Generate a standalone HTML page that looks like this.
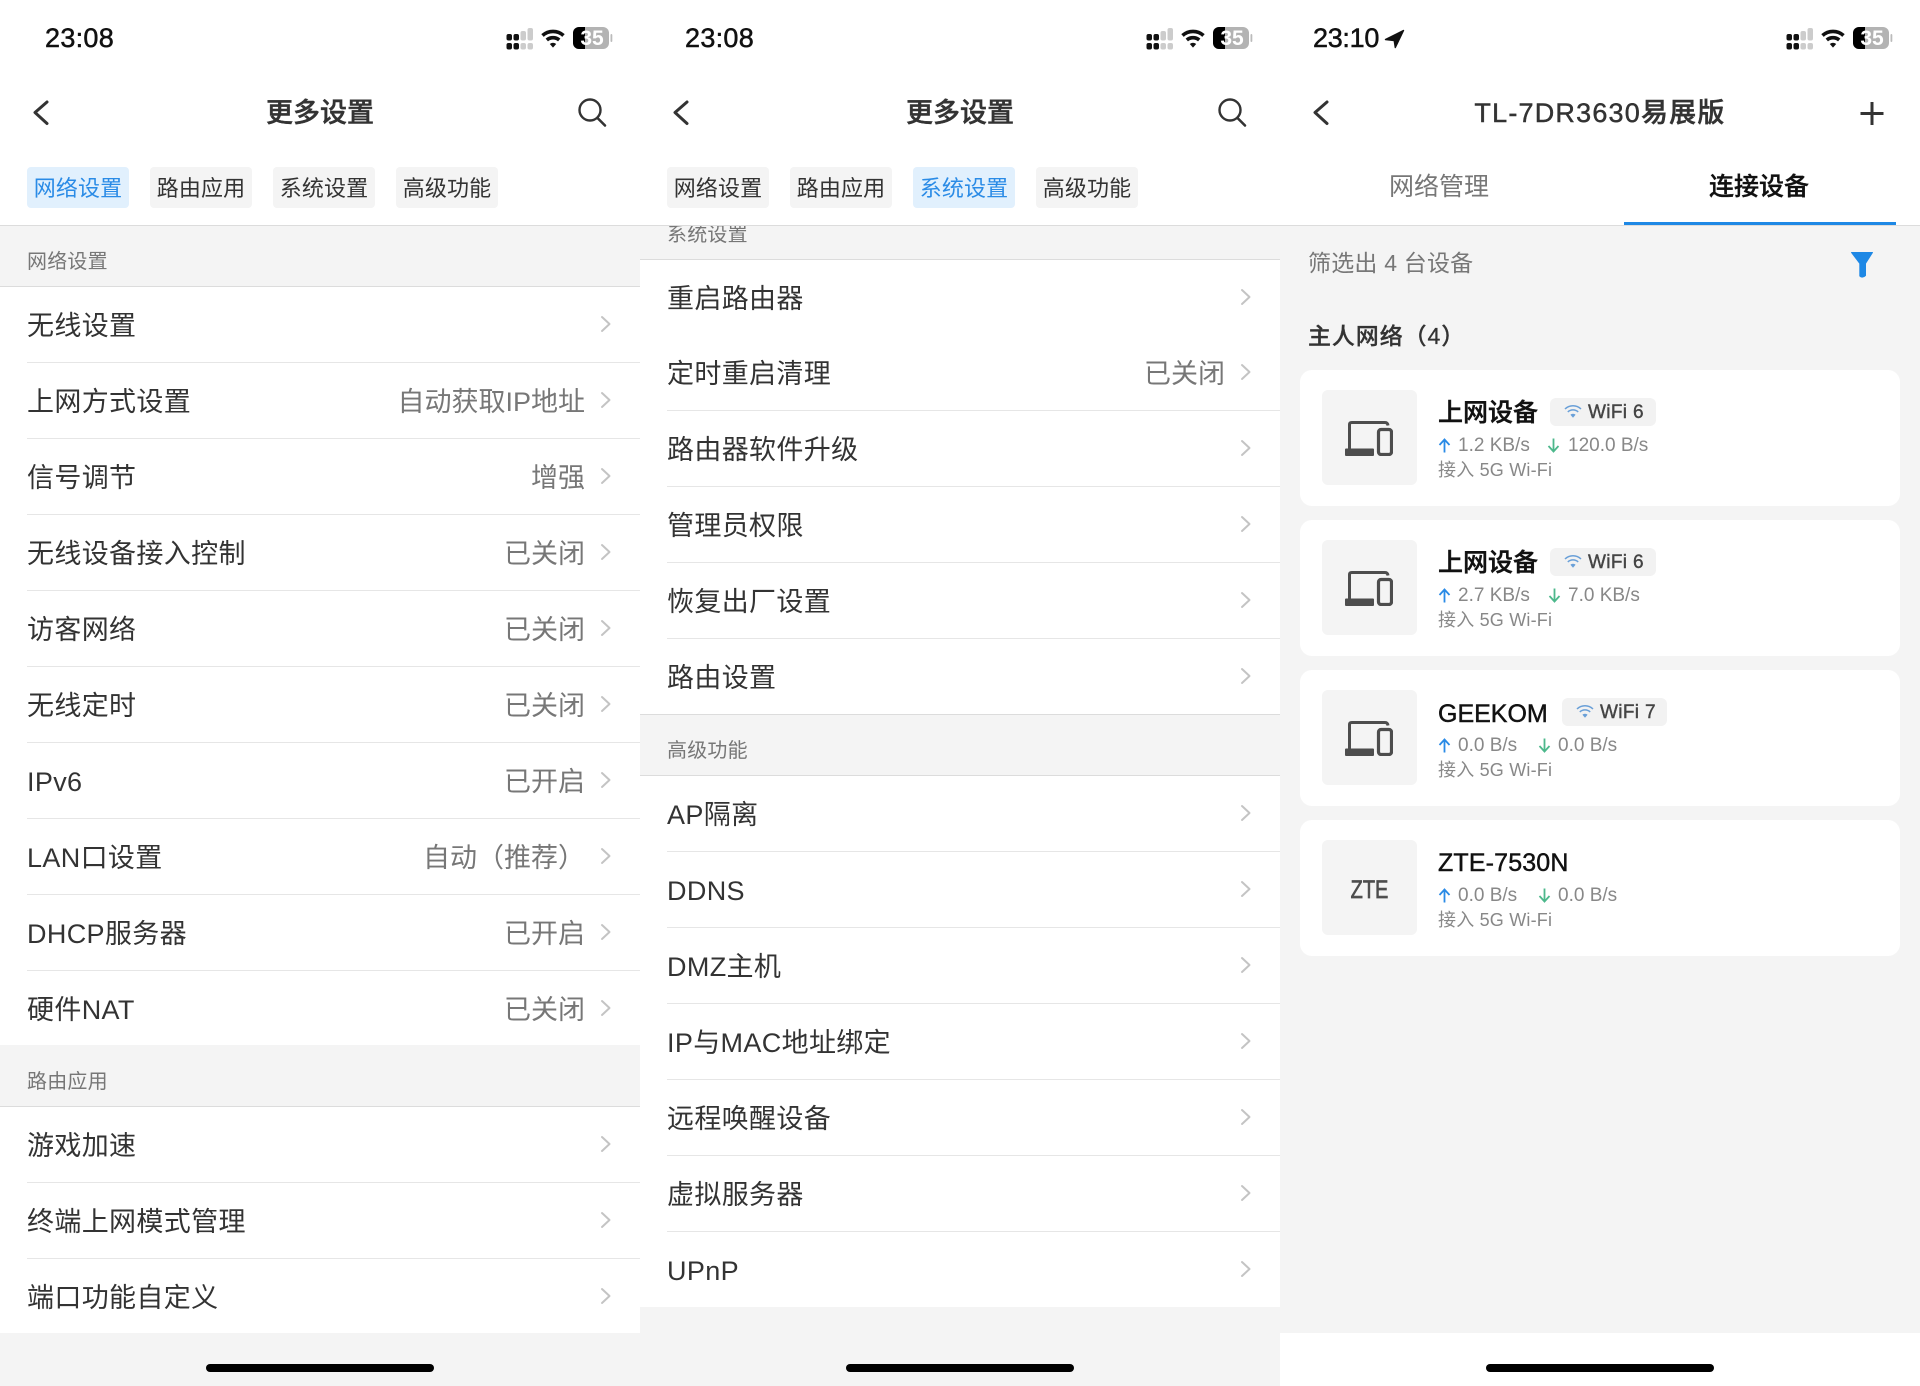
<!DOCTYPE html>
<html lang="zh">
<head>
<meta charset="utf-8">
<title>更多设置</title>
<style>
html,body{margin:0;padding:0;width:1920px;height:1386px;overflow:hidden;background:#fff}
*{box-sizing:border-box}
body{font-family:"Liberation Sans","Noto Sans CJK SC",sans-serif;color:#333}
.p{position:absolute;top:0;width:640px;height:1386px;overflow:hidden;background:#f4f4f4}
.hd{position:absolute;left:0;top:0;width:640px;height:226px;background:#fff;border-bottom:1px solid #dcdcdc;z-index:5}
.tm{position:absolute;top:20px;left:45px;font-size:27px;line-height:36px;color:#111;letter-spacing:.3px;-webkit-text-stroke:.5px #111}
.st{position:absolute;left:500px;top:20px;width:120px;height:40px}
.ti{position:absolute;left:0;width:640px;top:93px;text-align:center;font-size:27px;line-height:40px;font-weight:500;color:#333;-webkit-text-stroke:.45px #333}
.ic{position:absolute;left:0;top:0;width:640px;height:226px}
.tb{position:absolute;top:167px;height:41px;width:102px;background:#f4f4f4;border-radius:4px;text-align:center;font-size:22px;line-height:43px;color:#333;letter-spacing:.1px}
.tb.a{background:#e1f0fd;color:#2a8be6}
.s{position:absolute;left:0;width:640px;height:62px;background:#f4f4f4;border-bottom:1px solid #dcdcdc;font-size:20px;color:#777;padding-left:27px}
.s span{position:absolute;left:27px;bottom:9px;line-height:30px;letter-spacing:.2px}
.r{position:absolute;left:0;width:640px;height:76px;background:#fff;font-size:27px;line-height:76px;color:#333}
.r::after{content:"";position:absolute;left:27px;right:0;top:75px;height:1px;background:#e6e6e6}
.r.l::after{display:none}
.r b{position:absolute;left:27px;top:1px;font-weight:400;white-space:nowrap;letter-spacing:.35px}
.r i{position:absolute;right:55px;top:1px;font-style:normal;color:#777;white-space:nowrap}
.r svg{position:absolute;left:598px;top:27px;width:16px;height:20px}
.h{position:absolute;left:206px;top:1364px;width:228px;height:8px;border-radius:4px;background:#000;z-index:6}
.c{position:absolute;left:20px;width:600px;height:136px;background:#fff;border-radius:12px}
.bx{position:absolute;left:22px;top:20px;width:95px;height:95px;background:#f4f4f4;border-radius:6px}
.nm{position:absolute;left:138px;top:23px;line-height:40px;font-size:25px;font-weight:500;color:#111;white-space:nowrap;-webkit-text-stroke:.45px #111}
.bd{position:absolute;top:28px;height:28px;background:#f2f2f2;border-radius:6px;font-size:19px;line-height:30px;color:#444;white-space:nowrap;-webkit-text-stroke:.4px #444;letter-spacing:.35px}
.bd svg{position:absolute;left:14px;top:6px;width:18px;height:15px}
.bd span{position:absolute;top:0;left:38px}
.rt{position:absolute;top:63px;font-size:19px;line-height:26px;color:#888;white-space:nowrap}
.ar{position:absolute;top:68px;width:13px;height:15px}
.l3{position:absolute;left:138px;top:87px;font-size:18px;line-height:26px;color:#888;white-space:nowrap;letter-spacing:.2px}
.tt{position:absolute;top:167px;font-size:25px;line-height:40px;white-space:nowrap}
</style>
</head>
<body>

<!-- PANEL 1 -->
<div class="p" style="left:0">
  <div class="hd">
    <div class="tm">23:08</div>
    <svg class="st" viewBox="500 20 120 40">
      <g fill="#111"><rect x="506.5" y="34" width="5.5" height="6.5" rx="2"/><rect x="506.5" y="43" width="5.5" height="6.5" rx="2"/><rect x="513.5" y="34" width="5.5" height="6.5" rx="2"/><rect x="513.5" y="43" width="5.5" height="6.5" rx="2"/></g>
      <g fill="#ccc"><rect x="520.5" y="31" width="5.5" height="9.5" rx="2"/><rect x="520.5" y="43" width="5.5" height="6.5" rx="2"/><rect x="527.5" y="28" width="5.5" height="12.5" rx="2"/><rect x="527.5" y="43" width="5.5" height="6.5" rx="2"/></g>
      <g fill="none" stroke="#111" stroke-width="3.6" stroke-linecap="butt"><path d="M542.5 35.5A15.5 15.5 0 0 1 563.5 35.5"/><path d="M546.8 40A9.5 9.5 0 0 1 559.2 40"/></g>
      <path d="M549.8 44L553 47.6L556.2 44A4.6 4.6 0 0 0 549.8 44Z" fill="#111"/>
      <rect x="573" y="27" width="36" height="22" rx="6" fill="#b3b3b3"/>
      <path d="M585 27H579a6 6 0 0 0-6 6v10a6 6 0 0 0 6 6h6Z" fill="#000"/>
      <rect x="610.5" y="34" width="1.8" height="8" rx="1" fill="#bbb"/>
      <text x="592" y="45" text-anchor="middle" font-family="Liberation Sans" font-weight="700" font-size="21" fill="#fff">35</text>
    </svg>
    <svg class="ic" viewBox="0 0 640 226" fill="none" stroke="#333">
      <path d="M47 102L35 112.5L47 123.5" stroke-width="3" stroke-linecap="round" stroke-linejoin="round"/>
      <circle cx="590" cy="110" r="10.5" stroke-width="2.4"/>
      <path d="M597.5 118L605 125.5" stroke-width="2.6" stroke-linecap="round"/>
    </svg>
    <div class="ti">更多设置</div>
    <div class="tb a" style="left:27px">网络设置</div>
    <div class="tb" style="left:150px">路由应用</div>
    <div class="tb" style="left:273px">系统设置</div>
    <div class="tb" style="left:396px">高级功能</div>
  </div>

  <div class="s" style="top:225px"><span>网络设置</span></div>
  <div class="r" style="top:287px"><b>无线设置</b><svg viewBox="0 0 16 20"><path d="M4 3L11.5 10L4 17" fill="none" stroke="#c4c4c4" stroke-width="2" stroke-linecap="round" stroke-linejoin="round"/></svg></div>
  <div class="r" style="top:363px"><b>上网方式设置</b><i>自动获取IP地址</i><svg viewBox="0 0 16 20"><path d="M4 3L11.5 10L4 17" fill="none" stroke="#c4c4c4" stroke-width="2" stroke-linecap="round" stroke-linejoin="round"/></svg></div>
  <div class="r" style="top:439px"><b>信号调节</b><i>增强</i><svg viewBox="0 0 16 20"><path d="M4 3L11.5 10L4 17" fill="none" stroke="#c4c4c4" stroke-width="2" stroke-linecap="round" stroke-linejoin="round"/></svg></div>
  <div class="r" style="top:515px"><b>无线设备接入控制</b><i>已关闭</i><svg viewBox="0 0 16 20"><path d="M4 3L11.5 10L4 17" fill="none" stroke="#c4c4c4" stroke-width="2" stroke-linecap="round" stroke-linejoin="round"/></svg></div>
  <div class="r" style="top:591px"><b>访客网络</b><i>已关闭</i><svg viewBox="0 0 16 20"><path d="M4 3L11.5 10L4 17" fill="none" stroke="#c4c4c4" stroke-width="2" stroke-linecap="round" stroke-linejoin="round"/></svg></div>
  <div class="r" style="top:667px"><b>无线定时</b><i>已关闭</i><svg viewBox="0 0 16 20"><path d="M4 3L11.5 10L4 17" fill="none" stroke="#c4c4c4" stroke-width="2" stroke-linecap="round" stroke-linejoin="round"/></svg></div>
  <div class="r" style="top:743px"><b>IPv6</b><i>已开启</i><svg viewBox="0 0 16 20"><path d="M4 3L11.5 10L4 17" fill="none" stroke="#c4c4c4" stroke-width="2" stroke-linecap="round" stroke-linejoin="round"/></svg></div>
  <div class="r" style="top:819px"><b>LAN口设置</b><i>自动（推荐）</i><svg viewBox="0 0 16 20"><path d="M4 3L11.5 10L4 17" fill="none" stroke="#c4c4c4" stroke-width="2" stroke-linecap="round" stroke-linejoin="round"/></svg></div>
  <div class="r" style="top:895px"><b>DHCP服务器</b><i>已开启</i><svg viewBox="0 0 16 20"><path d="M4 3L11.5 10L4 17" fill="none" stroke="#c4c4c4" stroke-width="2" stroke-linecap="round" stroke-linejoin="round"/></svg></div>
  <div class="r l" style="top:971px"><b>硬件NAT</b><i>已关闭</i><svg viewBox="0 0 16 20"><path d="M4 3L11.5 10L4 17" fill="none" stroke="#c4c4c4" stroke-width="2" stroke-linecap="round" stroke-linejoin="round"/></svg></div>

  <div class="s" style="top:1045px"><span>路由应用</span></div>
  <div class="r" style="top:1107px"><b>游戏加速</b><svg viewBox="0 0 16 20"><path d="M4 3L11.5 10L4 17" fill="none" stroke="#c4c4c4" stroke-width="2" stroke-linecap="round" stroke-linejoin="round"/></svg></div>
  <div class="r" style="top:1183px"><b>终端上网模式管理</b><svg viewBox="0 0 16 20"><path d="M4 3L11.5 10L4 17" fill="none" stroke="#c4c4c4" stroke-width="2" stroke-linecap="round" stroke-linejoin="round"/></svg></div>
  <div class="r l" style="top:1259px;height:74px"><b>端口功能自定义</b><svg viewBox="0 0 16 20"><path d="M4 3L11.5 10L4 17" fill="none" stroke="#c4c4c4" stroke-width="2" stroke-linecap="round" stroke-linejoin="round"/></svg></div>
  <div class="h"></div>
</div>

<!-- PANEL 2 -->
<div class="p" style="left:640px">
  <div class="hd">
    <div class="tm">23:08</div>
    <svg class="st" viewBox="500 20 120 40">
      <g fill="#111"><rect x="506.5" y="34" width="5.5" height="6.5" rx="2"/><rect x="506.5" y="43" width="5.5" height="6.5" rx="2"/><rect x="513.5" y="34" width="5.5" height="6.5" rx="2"/><rect x="513.5" y="43" width="5.5" height="6.5" rx="2"/></g>
      <g fill="#ccc"><rect x="520.5" y="31" width="5.5" height="9.5" rx="2"/><rect x="520.5" y="43" width="5.5" height="6.5" rx="2"/><rect x="527.5" y="28" width="5.5" height="12.5" rx="2"/><rect x="527.5" y="43" width="5.5" height="6.5" rx="2"/></g>
      <g fill="none" stroke="#111" stroke-width="3.6" stroke-linecap="butt"><path d="M542.5 35.5A15.5 15.5 0 0 1 563.5 35.5"/><path d="M546.8 40A9.5 9.5 0 0 1 559.2 40"/></g>
      <path d="M549.8 44L553 47.6L556.2 44A4.6 4.6 0 0 0 549.8 44Z" fill="#111"/>
      <rect x="573" y="27" width="36" height="22" rx="6" fill="#b3b3b3"/>
      <path d="M585 27H579a6 6 0 0 0-6 6v10a6 6 0 0 0 6 6h6Z" fill="#000"/>
      <rect x="610.5" y="34" width="1.8" height="8" rx="1" fill="#bbb"/>
      <text x="592" y="45" text-anchor="middle" font-family="Liberation Sans" font-weight="700" font-size="21" fill="#fff">35</text>
    </svg>
    <svg class="ic" viewBox="0 0 640 226" fill="none" stroke="#333">
      <path d="M47 102L35 112.5L47 123.5" stroke-width="3" stroke-linecap="round" stroke-linejoin="round"/>
      <circle cx="590" cy="110" r="10.5" stroke-width="2.4"/>
      <path d="M597.5 118L605 125.5" stroke-width="2.6" stroke-linecap="round"/>
    </svg>
    <div class="ti">更多设置</div>
    <div class="tb" style="left:27px">网络设置</div>
    <div class="tb" style="left:150px">路由应用</div>
    <div class="tb a" style="left:273px">系统设置</div>
    <div class="tb" style="left:396px">高级功能</div>
  </div>

  <div class="s" style="top:198px"><span>系统设置</span></div>
  <div class="r" style="top:260px"><b>重启路由器</b><svg viewBox="0 0 16 20"><path d="M4 3L11.5 10L4 17" fill="none" stroke="#c4c4c4" stroke-width="2" stroke-linecap="round" stroke-linejoin="round"/></svg></div>
  <div class="r" style="top:335px"><b>定时重启清理</b><i>已关闭</i><svg viewBox="0 0 16 20"><path d="M4 3L11.5 10L4 17" fill="none" stroke="#c4c4c4" stroke-width="2" stroke-linecap="round" stroke-linejoin="round"/></svg></div>
  <div class="r" style="top:411px"><b>路由器软件升级</b><svg viewBox="0 0 16 20"><path d="M4 3L11.5 10L4 17" fill="none" stroke="#c4c4c4" stroke-width="2" stroke-linecap="round" stroke-linejoin="round"/></svg></div>
  <div class="r" style="top:487px"><b>管理员权限</b><svg viewBox="0 0 16 20"><path d="M4 3L11.5 10L4 17" fill="none" stroke="#c4c4c4" stroke-width="2" stroke-linecap="round" stroke-linejoin="round"/></svg></div>
  <div class="r" style="top:563px"><b>恢复出厂设置</b><svg viewBox="0 0 16 20"><path d="M4 3L11.5 10L4 17" fill="none" stroke="#c4c4c4" stroke-width="2" stroke-linecap="round" stroke-linejoin="round"/></svg></div>
  <div class="r l" style="top:639px"><b>路由设置</b><svg viewBox="0 0 16 20"><path d="M4 3L11.5 10L4 17" fill="none" stroke="#c4c4c4" stroke-width="2" stroke-linecap="round" stroke-linejoin="round"/></svg></div>

  <div class="s" style="top:714px;border-top:1px solid #dcdcdc"><span>高级功能</span></div>
  <div class="r" style="top:776px"><b>AP隔离</b><svg viewBox="0 0 16 20"><path d="M4 3L11.5 10L4 17" fill="none" stroke="#c4c4c4" stroke-width="2" stroke-linecap="round" stroke-linejoin="round"/></svg></div>
  <div class="r" style="top:852px"><b>DDNS</b><svg viewBox="0 0 16 20"><path d="M4 3L11.5 10L4 17" fill="none" stroke="#c4c4c4" stroke-width="2" stroke-linecap="round" stroke-linejoin="round"/></svg></div>
  <div class="r" style="top:928px"><b>DMZ主机</b><svg viewBox="0 0 16 20"><path d="M4 3L11.5 10L4 17" fill="none" stroke="#c4c4c4" stroke-width="2" stroke-linecap="round" stroke-linejoin="round"/></svg></div>
  <div class="r" style="top:1004px"><b>IP与MAC地址绑定</b><svg viewBox="0 0 16 20"><path d="M4 3L11.5 10L4 17" fill="none" stroke="#c4c4c4" stroke-width="2" stroke-linecap="round" stroke-linejoin="round"/></svg></div>
  <div class="r" style="top:1080px"><b>远程唤醒设备</b><svg viewBox="0 0 16 20"><path d="M4 3L11.5 10L4 17" fill="none" stroke="#c4c4c4" stroke-width="2" stroke-linecap="round" stroke-linejoin="round"/></svg></div>
  <div class="r" style="top:1156px"><b>虚拟服务器</b><svg viewBox="0 0 16 20"><path d="M4 3L11.5 10L4 17" fill="none" stroke="#c4c4c4" stroke-width="2" stroke-linecap="round" stroke-linejoin="round"/></svg></div>
  <div class="r l" style="top:1232px;height:75px"><b>UPnP</b><svg viewBox="0 0 16 20"><path d="M4 3L11.5 10L4 17" fill="none" stroke="#c4c4c4" stroke-width="2" stroke-linecap="round" stroke-linejoin="round"/></svg></div>
  <div class="h"></div>
</div>

<!-- PANEL 3 -->
<div class="p" style="left:1280px">
  <div class="hd">
    <div class="tm" style="left:33px;letter-spacing:-.3px">23:10</div>
    <svg class="ic" viewBox="0 0 640 226" style="z-index:1">
      <path d="M123.5 30.5L105.5 39.5L114.2 40.5L115.3 47.5Z" fill="#111" stroke="#111" stroke-width="1.4" stroke-linejoin="round"/>
    </svg>
    <svg class="st" viewBox="500 20 120 40">
      <g fill="#111"><rect x="506.5" y="34" width="5.5" height="6.5" rx="2"/><rect x="506.5" y="43" width="5.5" height="6.5" rx="2"/><rect x="513.5" y="34" width="5.5" height="6.5" rx="2"/><rect x="513.5" y="43" width="5.5" height="6.5" rx="2"/></g>
      <g fill="#ccc"><rect x="520.5" y="31" width="5.5" height="9.5" rx="2"/><rect x="520.5" y="43" width="5.5" height="6.5" rx="2"/><rect x="527.5" y="28" width="5.5" height="12.5" rx="2"/><rect x="527.5" y="43" width="5.5" height="6.5" rx="2"/></g>
      <g fill="none" stroke="#111" stroke-width="3.6" stroke-linecap="butt"><path d="M542.5 35.5A15.5 15.5 0 0 1 563.5 35.5"/><path d="M546.8 40A9.5 9.5 0 0 1 559.2 40"/></g>
      <path d="M549.8 44L553 47.6L556.2 44A4.6 4.6 0 0 0 549.8 44Z" fill="#111"/>
      <rect x="573" y="27" width="36" height="22" rx="6" fill="#b3b3b3"/>
      <path d="M585 27H579a6 6 0 0 0-6 6v10a6 6 0 0 0 6 6h6Z" fill="#000"/>
      <rect x="610.5" y="34" width="1.8" height="8" rx="1" fill="#bbb"/>
      <text x="592" y="45" text-anchor="middle" font-family="Liberation Sans" font-weight="700" font-size="21" fill="#fff">35</text>
    </svg>
    <svg class="ic" viewBox="0 0 640 226" fill="none" stroke="#333">
      <path d="M47 102L35 112.5L47 123.5" stroke-width="3" stroke-linecap="round" stroke-linejoin="round"/>
      <path d="M592 102V125M580.5 113.5H603.5" stroke-width="3"/>
    </svg>
    <div class="ti" style="letter-spacing:1.2px">TL-7DR3630易展版</div>
    <div class="tt" style="left:109px;color:#777">网络管理</div>
    <div class="tt" style="left:429px;color:#111;font-weight:500;-webkit-text-stroke:.35px #111">连接设备</div>
    <div style="position:absolute;left:344px;top:222px;width:272px;height:3px;background:#1e88e5"></div>
  </div>

  <div style="position:absolute;left:28px;top:246px;font-size:23px;line-height:34px;color:#777;white-space:nowrap;letter-spacing:.2px">筛选出 4 台设备</div>
  <svg style="position:absolute;left:570px;top:250px;width:24px;height:30px" viewBox="0 0 24 30"><path d="M1.5 2.5H22.5L15.5 13.5V25.5Q12.5 28.5 9.8 26V13.5Z" fill="#1e88e5" stroke="#1e88e5" stroke-width="1" stroke-linejoin="round"/></svg>
  <div style="position:absolute;left:28px;top:319px;font-size:23px;line-height:34px;font-weight:500;color:#333;white-space:nowrap;letter-spacing:.9px;-webkit-text-stroke:.3px #333">主人网络（4）</div>

  <div class="c" style="top:370px">
    <div class="bx"><svg style="position:absolute;left:23px;top:31px;width:48px;height:35px" viewBox="0 0 48 35"><path d="M4.5 28V3.5Q4.5 1.5 6.8 1.5H40Q42.6 1.5 43 4.5" fill="none" stroke="#4d4d4d" stroke-width="3"/><rect x="0" y="27.5" width="29" height="7.5" rx="1" fill="#4d4d4d"/><rect x="33.5" y="8.5" width="13" height="25" rx="2.5" fill="none" stroke="#4d4d4d" stroke-width="3.2"/></svg></div>
    <div class="nm">上网设备</div>
    <div class="bd" style="left:250px;width:106px"><svg viewBox="0 0 18 15"><g fill="none" stroke="#6aa0d8" stroke-width="1.5"><path d="M1 5A11.5 11.5 0 0 1 17 5"/><path d="M3.8 8A7.5 7.5 0 0 1 14.2 8"/></g><path d="M6.4 10.8A3.8 3.8 0 0 1 11.6 10.8L9 13.8Z" fill="#6aa0d8"/></svg><span>WiFi 6</span></div>
    <svg class="ar" style="left:138px" viewBox="0 0 13 15"><path d="M6.5 14.5V2M1.5 7L6.5 1.5L11.5 7" fill="none" stroke="#2a8be6" stroke-width="1.8"/></svg>
    <div class="rt" style="left:158px">1.2 KB/s</div>
    <svg class="ar" style="left:247px" viewBox="0 0 13 15"><path d="M6.5 .5V13M1.5 8L6.5 13.5L11.5 8" fill="none" stroke="#4db88c" stroke-width="1.8"/></svg>
    <div class="rt" style="left:268px">120.0 B/s</div>
    <div class="l3">接入 5G Wi-Fi</div>
  </div>

  <div class="c" style="top:520px">
    <div class="bx"><svg style="position:absolute;left:23px;top:31px;width:48px;height:35px" viewBox="0 0 48 35"><path d="M4.5 28V3.5Q4.5 1.5 6.8 1.5H40Q42.6 1.5 43 4.5" fill="none" stroke="#4d4d4d" stroke-width="3"/><rect x="0" y="27.5" width="29" height="7.5" rx="1" fill="#4d4d4d"/><rect x="33.5" y="8.5" width="13" height="25" rx="2.5" fill="none" stroke="#4d4d4d" stroke-width="3.2"/></svg></div>
    <div class="nm">上网设备</div>
    <div class="bd" style="left:250px;width:106px"><svg viewBox="0 0 18 15"><g fill="none" stroke="#6aa0d8" stroke-width="1.5"><path d="M1 5A11.5 11.5 0 0 1 17 5"/><path d="M3.8 8A7.5 7.5 0 0 1 14.2 8"/></g><path d="M6.4 10.8A3.8 3.8 0 0 1 11.6 10.8L9 13.8Z" fill="#6aa0d8"/></svg><span>WiFi 6</span></div>
    <svg class="ar" style="left:138px" viewBox="0 0 13 15"><path d="M6.5 14.5V2M1.5 7L6.5 1.5L11.5 7" fill="none" stroke="#2a8be6" stroke-width="1.8"/></svg>
    <div class="rt" style="left:158px">2.7 KB/s</div>
    <svg class="ar" style="left:248px" viewBox="0 0 13 15"><path d="M6.5 .5V13M1.5 8L6.5 13.5L11.5 8" fill="none" stroke="#4db88c" stroke-width="1.8"/></svg>
    <div class="rt" style="left:268px">7.0 KB/s</div>
    <div class="l3">接入 5G Wi-Fi</div>
  </div>

  <div class="c" style="top:670px">
    <div class="bx"><svg style="position:absolute;left:23px;top:31px;width:48px;height:35px" viewBox="0 0 48 35"><path d="M4.5 28V3.5Q4.5 1.5 6.8 1.5H40Q42.6 1.5 43 4.5" fill="none" stroke="#4d4d4d" stroke-width="3"/><rect x="0" y="27.5" width="29" height="7.5" rx="1" fill="#4d4d4d"/><rect x="33.5" y="8.5" width="13" height="25" rx="2.5" fill="none" stroke="#4d4d4d" stroke-width="3.2"/></svg></div>
    <div class="nm" style="top:24px">GEEKOM</div>
    <div class="bd" style="left:262px;width:105px"><svg viewBox="0 0 18 15"><g fill="none" stroke="#6aa0d8" stroke-width="1.5"><path d="M1 5A11.5 11.5 0 0 1 17 5"/><path d="M3.8 8A7.5 7.5 0 0 1 14.2 8"/></g><path d="M6.4 10.8A3.8 3.8 0 0 1 11.6 10.8L9 13.8Z" fill="#6aa0d8"/></svg><span>WiFi 7</span></div>
    <svg class="ar" style="left:138px" viewBox="0 0 13 15"><path d="M6.5 14.5V2M1.5 7L6.5 1.5L11.5 7" fill="none" stroke="#2a8be6" stroke-width="1.8"/></svg>
    <div class="rt" style="left:158px">0.0 B/s</div>
    <svg class="ar" style="left:238px" viewBox="0 0 13 15"><path d="M6.5 .5V13M1.5 8L6.5 13.5L11.5 8" fill="none" stroke="#4db88c" stroke-width="1.8"/></svg>
    <div class="rt" style="left:258px">0.0 B/s</div>
    <div class="l3">接入 5G Wi-Fi</div>
  </div>

  <div class="c" style="top:820px">
    <div class="bx"><div style="position:absolute;left:0;top:32px;width:95px;text-align:center;font-size:25px;line-height:36px;color:#4d4d4d;transform:scaleX(.8);-webkit-text-stroke:.7px #4d4d4d">ZTE</div></div>
    <div class="nm" style="letter-spacing:.15px">ZTE-7530N</div>
    <svg class="ar" style="left:138px" viewBox="0 0 13 15"><path d="M6.5 14.5V2M1.5 7L6.5 1.5L11.5 7" fill="none" stroke="#2a8be6" stroke-width="1.8"/></svg>
    <div class="rt" style="left:158px">0.0 B/s</div>
    <svg class="ar" style="left:238px" viewBox="0 0 13 15"><path d="M6.5 .5V13M1.5 8L6.5 13.5L11.5 8" fill="none" stroke="#4db88c" stroke-width="1.8"/></svg>
    <div class="rt" style="left:258px">0.0 B/s</div>
    <div class="l3">接入 5G Wi-Fi</div>
  </div>

  <div style="position:absolute;left:0;top:1333px;width:640px;height:53px;background:#fff"></div>
  <div class="h"></div>
</div>

</body>
</html>
